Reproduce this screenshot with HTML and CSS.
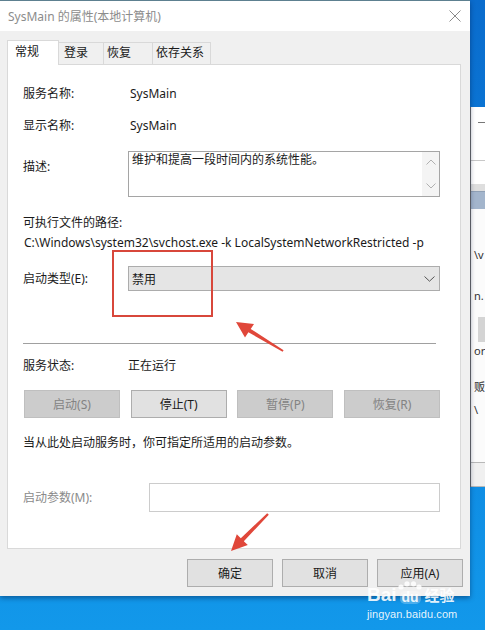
FILE: index.html
```html
<!DOCTYPE html>
<html lang="zh-CN">
<head>
<meta charset="utf-8">
<title>SysMain 的属性</title>
<link rel="stylesheet" href="styles.css">
</head>
<body>
<div class="desktop">
  <div class="dialog">
    <div class="titlebar">
      <span class="title">SysMain 的属性(本地计算机)</span>
      <svg class="close" width="12" height="12" viewBox="0 0 12 12"><path d="M0.5 0.5 L11.5 11.5 M11.5 0.5 L0.5 11.5" stroke="#8a8a8a" stroke-width="1" fill="none"/></svg>
    </div>
    <div class="tabs">
      <div class="tab active">常规</div>
      <div class="tab">登录</div>
      <div class="tab">恢复</div>
      <div class="tab">依存关系</div>
    </div>
    <div class="panel">
      <div class="row r1"><span class="lbl">服务名称:</span><span class="val">SysMain</span></div>
      <div class="row r2"><span class="lbl">显示名称:</span><span class="val">SysMain</span></div>
      <div class="row rdesc">
        <span class="lbl lbl-desc">描述:</span>
        <div class="descbox">
          <span class="desctext">维护和提高一段时间内的系统性能。</span>
          <div class="vscroll">
            <svg width="10" height="6" viewBox="0 0 10 6"><path d="M0.5 5.5 L5 1 L9.5 5.5" stroke="#b0b0b0" fill="none"/></svg>
            <svg width="10" height="6" viewBox="0 0 10 6"><path d="M0.5 0.5 L5 5 L9.5 0.5" stroke="#b0b0b0" fill="none"/></svg>
          </div>
        </div>
      </div>
      <div class="pathlbl">可执行文件的路径:</div>
      <div class="path">C:\Windows\system32\svchost.exe -k LocalSystemNetworkRestricted -p</div>
      <div class="row rstart">
        <span class="lbl">启动类型(E):</span>
        <div class="combo">
          <span>禁用</span>
          <svg width="11" height="6" viewBox="0 0 11 6"><path d="M0.5 0.5 L5.5 5.2 L10.5 0.5" stroke="#555" fill="none"/></svg>
        </div>
      </div>
      <div class="sep"></div>
      <div class="row rstatus"><span class="lbl">服务状态:</span><span class="val0">正在运行</span></div>
      <div class="btnrow">
        <div class="btn disabled">启动(S)</div>
        <div class="btn">停止(T)</div>
        <div class="btn disabled">暂停(P)</div>
        <div class="btn disabled">恢复(R)</div>
      </div>
      <div class="hint">当从此处启动服务时，你可指定所适用的启动参数。</div>
      <div class="row rparam">
        <span class="lbl lbl-param">启动参数(M):</span>
        <div class="paraminput"></div>
      </div>
    </div>
    <div class="footer">
      <div class="fbtn">确定</div>
      <div class="fbtn">取消</div>
      <div class="fbtn">应用(A)</div>
    </div>
  </div>

  <div class="bgwin">
    <div class="bw-a"><div class="bw-dash"></div></div>
    <div class="bw-line"></div>
    <div class="bw-b"></div>
    <div class="bw-grey"></div>
    <div class="bw-sel"></div>
    <div class="bw-list">
      <div class="bw-t t1">\v</div>
      <div class="bw-t t2">n.</div>
      <div class="bw-band"></div>
      <div class="bw-t t3">or</div>
      <div class="bw-t t4">贩</div>
      <div class="bw-t t5">\</div>
    </div>
    <div class="bw-line2"></div>
    <div class="bw-c"></div>
    <div class="bw-line2"></div>
  </div>

  <svg class="annot" width="485" height="630" viewBox="0 0 485 630">
    <rect x="113" y="251" width="99" height="65" fill="none" stroke="#d8473b" stroke-width="2"/>
    <polygon fill="#e0473a" points="236,322 254,324 250.7,328.9 283.6,350.2 282.6,351.8 248.4,332.2 245,337.5"/>
    <polygon fill="#e0473a" points="231,551 247.8,545 243.8,541.2 268.8,514.8 267.2,513.2 240.8,538.2 236.8,534.3"/>
  </svg>

  <div class="watermark">
    <div class="wm-logo">
      <span class="wm-bai">Bai</span>
      <span class="wm-paw">
        <svg class="wm-toes" width="26" height="10" viewBox="0 0 26 10"><circle cx="4" cy="6" r="2.6"/><circle cx="10" cy="2.8" r="2.6"/><circle cx="16.5" cy="2.8" r="2.6"/><circle cx="22" cy="6" r="2.6"/></svg>
        <span class="wm-du">du</span>
      </span>
      <span class="wm-jy">经验</span>
    </div>
    <div class="wm-url">jingyan.baidu.com</div>
  </div>
</div>
</body>
</html>
```

FILE: styles.css
```css
* { box-sizing: border-box; }
html, body { margin: 0; padding: 0; }
body {
  font-family: "Noto Sans", "Noto Sans CJK SC", sans-serif;
  font-size: 12px;
  color: #1a1a1a;
}
.desktop {
  position: relative;
  width: 485px;
  height: 630px;
  overflow: hidden;
  background: linear-gradient(180deg, #0a6ccd 0%, #0b7fdc 45%, #1298ea 100%);
  display: flex;
  align-items: flex-start;
}
.dialog {
  position: relative;
  z-index: 2;
  width: 470px;
  height: 596px;
  flex: none;
  background: #f0f0f0;
  border-top: 1px solid #5d8090;
  box-shadow: 0 2px 5px rgba(0, 20, 60, 0.45);
}
.titlebar {
  height: 30px;
  background: #ffffff;
  display: flex;
  align-items: center;
  justify-content: space-between;
  padding: 0 9px 1px 8px;
}
.title { color: #8c8c8c; font-size: 12px; }
.close { display: block; margin-top: 0; }

.tabs {
  display: flex;
  align-items: flex-end;
  height: 33px;
  padding-left: 7px;
}
.tab {
  height: 22px;
  line-height: 20px;
  border: 1px solid #d9d9d9;
  border-bottom: none;
  background: #f0f0f0;
  margin-left: -1px;
  padding-left: 5px;
  position: relative;
}
.tab:nth-child(2) { width: 46px; }
.tab:nth-child(3) { width: 50px; padding-left: 3px; }
.tab:nth-child(4) { width: 59px; padding-left: 3px; }
.tab.active {
  margin-left: 0;
  width: 52px;
  height: 25px;
  line-height: 22px;
  background: #ffffff;
  padding-left: 7px;
  margin-bottom: -1px;
  z-index: 1;
}
.panel {
  margin-left: 7px;
  width: 454px;
  height: 485px;
  background: #ffffff;
  border: 1px solid #d9d9d9;
  padding: 21px 20px 0 15px;
}
.row { display: flex; align-items: center; }
.lbl { width: 105px; flex: none; line-height: 16px; }
.val { padding-left: 2px; line-height: 16px; }
.val0 { line-height: 16px; }
.r1, .r2, .rstatus { height: 16px; }
.r2 { margin-top: 16px; }
.rdesc { margin-top: 17px; align-items: flex-start; }
.lbl-desc { padding-top: 8px; }
.descbox {
  flex: 1;
  height: 46px;
  border: 1px solid #a5a5a5;
  display: flex;
  justify-content: space-between;
}
.desctext { padding: 0 0 0 3px; line-height: 16px; }
.vscroll {
  width: 17px;
  background: #f4f4f4;
  display: flex;
  flex-direction: column;
  justify-content: space-between;
  align-items: center;
  padding: 7px 0 7px;
}
.vscroll svg { display: block; }
.pathlbl { margin-top: 18px; line-height: 16px; }
.path { margin-top: 4px; line-height: 16px; white-space: nowrap; padding-left: 1px; }
.rstart { margin-top: 15px; }
.combo {
  flex: 1;
  height: 25px;
  background: #e5e5e5;
  border: 1px solid #acacac;
  display: flex;
  align-items: center;
  justify-content: space-between;
  padding: 0 4px 0 3px;
}
.combo svg { display: block; }
.sep { margin-top: 52px; margin-right: 4px; height: 1px; background: #a0a0a0; }
.rstatus { margin-top: 14px; }
.btnrow {
  margin-top: 16px;
  display: flex;
  justify-content: space-between;
  padding-left: 1px;
}
.btn {
  width: 96px;
  height: 28px;
  display: flex;
  align-items: center;
  justify-content: center;
  background: #e1e1e1;
  border: 1px solid #adadad;
}
.btn.disabled { background: #cccccc; border-color: #bfbfbf; color: #838383; }
.hint { margin-top: 17px; line-height: 16px; }
.rparam { margin-top: 32px; }
.lbl-param { width: 126px; color: #8a8a8a; }
.paraminput { flex: 1; height: 29px; border: 1px solid #cccccc; background: #ffffff; }

.footer {
  display: flex;
  justify-content: flex-end;
  gap: 9px;
  padding: 10px 7px 0 0;
}
.fbtn {
  width: 86px;
  height: 28px;
  display: flex;
  align-items: center;
  justify-content: center;
  background: #e1e1e1;
  border: 1px solid #adadad;
}

/* background window peeking on the right */
.bgwin {
  position: absolute;
  left: 470px;
  top: 107px;
  width: 15px;
  height: 380px;
  background: #f7f7f7;
  border-left: 1px solid #6e6e6e;
  display: flex;
  flex-direction: column;
  z-index: 1;
}
.bw-a { height: 53px; background: #ffffff; padding: 15px 0 0 7px; }
.bw-dash { height: 1px; background: #777; }
.bw-line { height: 1px; background: #c8c8c8; }
.bw-b { height: 23px; background: #ffffff; }
.bw-grey { height: 7px; background: #dedede; }
.bw-sel { height: 18px; background: #a3b5cc; border-top: 1px solid #8fa0b5; }
.bw-list { flex: 1; background: #fbfbfb; position: relative; font-size: 11px; color: #333; overflow: hidden; padding-left: 3px; }
.bw-t { height: 16px; line-height: 16px; white-space: nowrap; }
.t1 { margin-top: 38px; }
.t2 { margin-top: 25px; }
.bw-band { margin: 13px 0 0 4px; height: 25px; background: #d4d4d4; }
.t3 { margin-top: 1px; }
.t4 { margin-top: 20px; }
.t5 { margin-top: 7px; }
.bw-line2 { height: 1px; background: #b8b8b8; flex: none; }
.bw-c { height: 23px; background: #f0f0f0; flex: none; }

.annot { position: absolute; left: 0; top: 0; z-index: 3; pointer-events: none; }

.watermark {
  position: absolute;
  left: 367px;
  top: 582px;
  z-index: 4;
  color: rgba(255, 255, 255, 0.9);
  font-family: "Liberation Sans", Arial, sans-serif;
}
.wm-logo { display: flex; align-items: flex-end; height: 22px; }
.wm-bai { font-size: 19px; font-weight: bold; line-height: 19px; letter-spacing: 0; }
.wm-paw { position: relative; display: flex; flex-direction: column; align-items: center; width: 27px; }
.wm-toes { display: block; fill: rgba(255, 255, 255, 0.85); }
.wm-du { font-size: 14px; font-weight: bold; line-height: 13px; background: rgba(255,255,255,0.25); border-radius: 5px; padding: 0 2px; }
.wm-jy { font-family: "Noto Sans CJK SC", sans-serif; font-size: 15px; font-weight: bold; line-height: 18px; margin-left: 1px; }
.wm-url { font-size: 11px; margin-top: 4px; letter-spacing: 0.1px; }
```
